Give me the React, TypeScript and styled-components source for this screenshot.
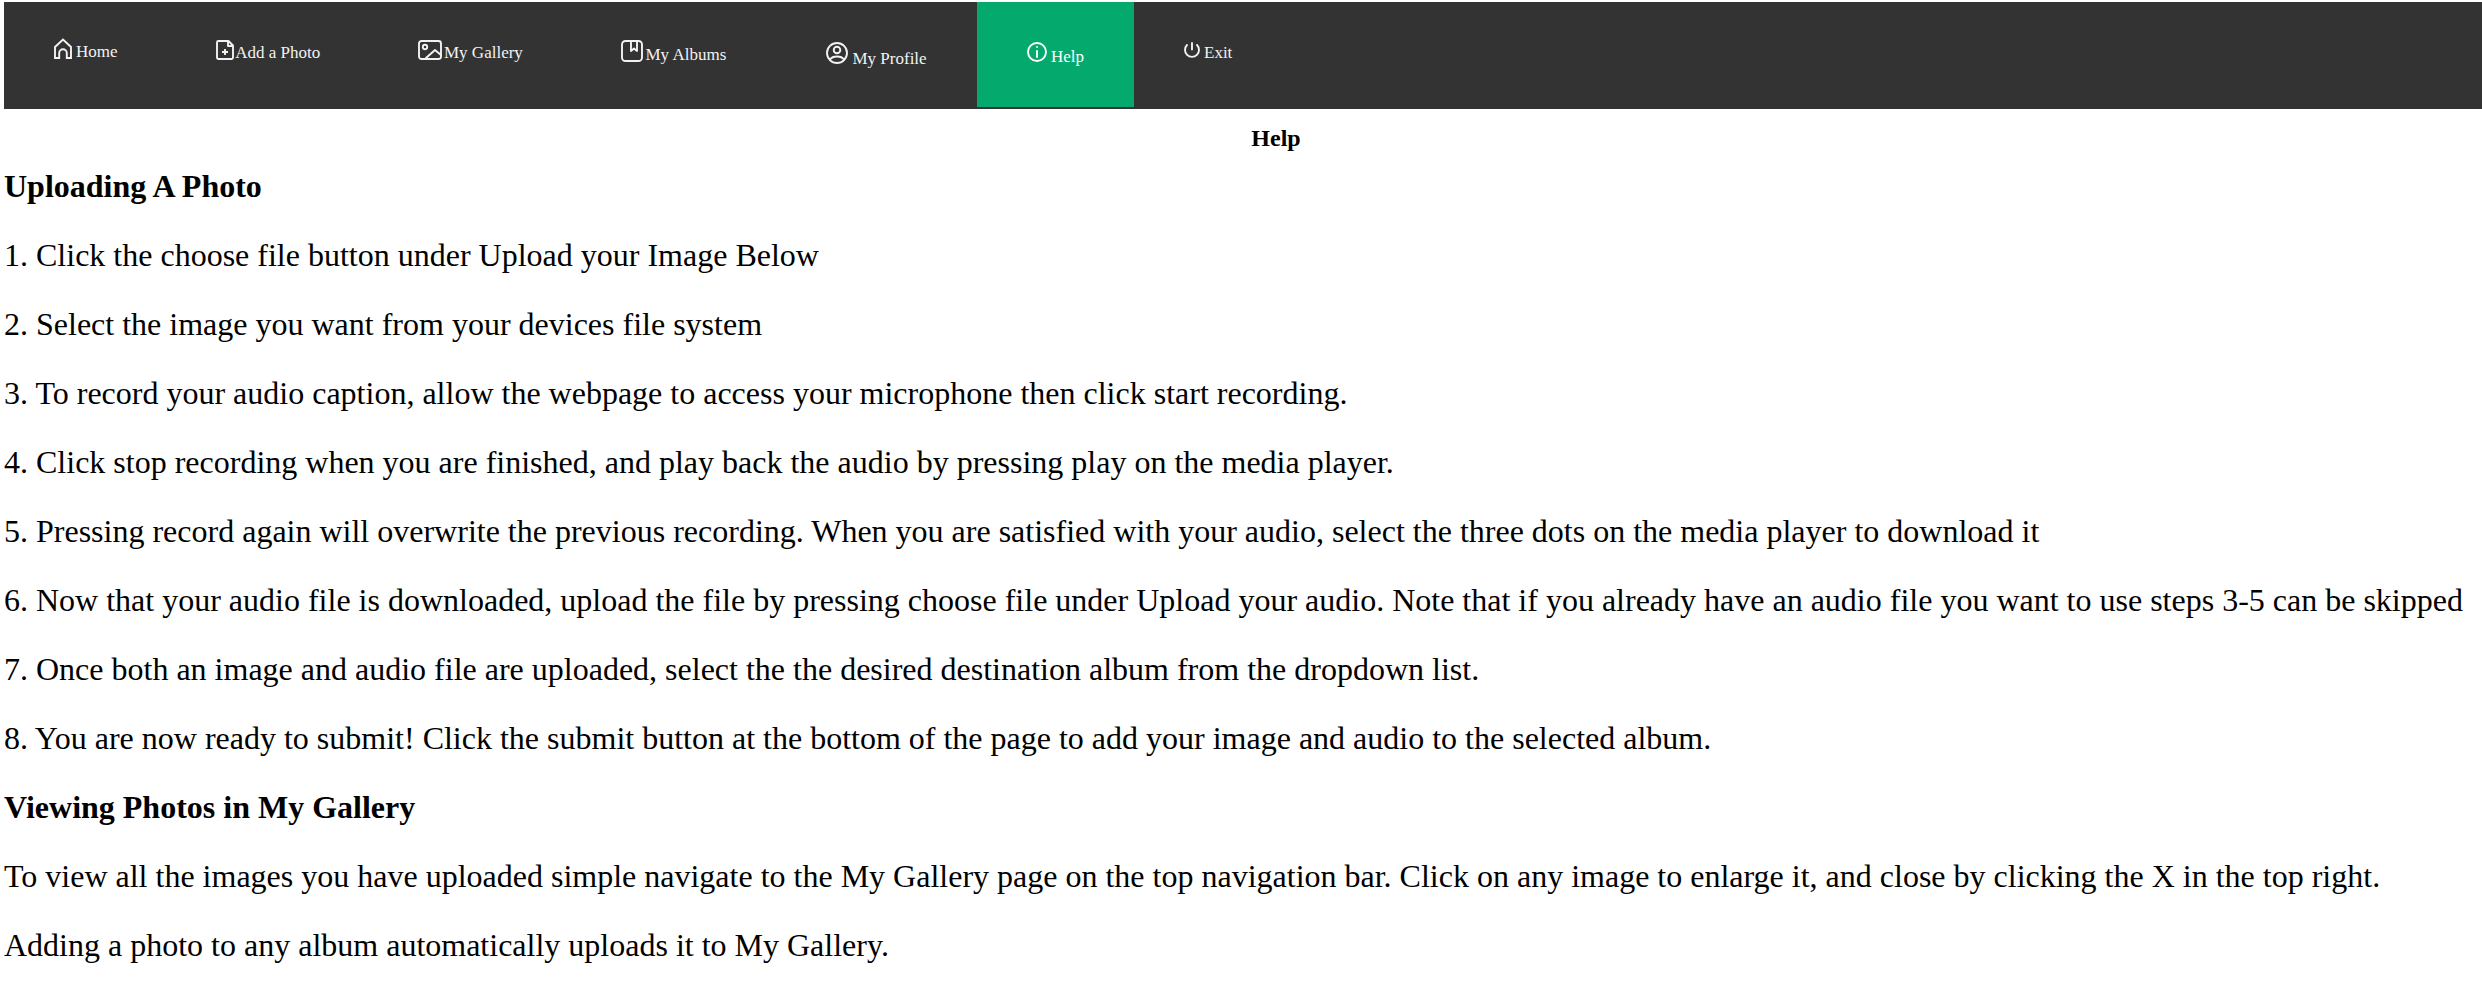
import React from "react";
import styled, { createGlobalStyle } from "styled-components";

const GlobalStyle = createGlobalStyle`
  html, body { margin: 0; background: #fff; overflow: hidden; }
  body { font-family: "Liberation Serif", "Times New Roman", serif; color: #000; }
`;

const Page = styled.div`
  padding: 2px 0 0 4px;
`;

const NavBar = styled.nav`
  display: flex;
  align-items: flex-start;
  height: 107px;
  background: #333;
`;

const NavItem = styled.a<{ $width: number; $gap: number; $active?: boolean }>`
  display: flex;
  align-items: flex-start;
  gap: ${(p) => p.$gap}px;
  box-sizing: border-box;
  width: ${(p) => p.$width}px;
  height: 105px;
  padding-left: 50px;
  background: ${(p) => (p.$active ? "#04aa6d" : "transparent")};
  color: ${(p) => (p.$active ? "#fff" : "#f2f2f2")};
  font-size: 17px;
  line-height: 20px;
  white-space: nowrap;
  text-decoration: none;
`;

const Icon = styled.svg<{ $top: number }>`
  flex: none;
  display: block;
  margin-top: ${(p) => p.$top}px;
  fill: none;
  stroke: currentColor;
  stroke-width: 1.9;
  stroke-linecap: round;
  stroke-linejoin: round;
`;

const Label = styled.span<{ $baseline: number }>`
  margin-top: ${(p) => p.$baseline - 15}px;
`;

const Title = styled.h1`
  margin: 0;
  padding: 15px 0 0 66px;
  height: 28px;
  font-size: 24px;
  line-height: 28px;
  text-align: center;
`;

const Line = styled.p`
  margin: 0;
  font-size: 32px;
  line-height: 69px;
  white-space: nowrap;
`;

const Heading = styled(Line).attrs({ as: "h2" })`
  font-weight: bold;
`;

type Item = {
  label: string;
  width: number;
  gap: number;
  baseline: number;
  icon: { w: number; h: number; top: number; art: React.ReactNode };
  active?: boolean;
};

const items: Item[] = [
  {
    label: "Home", width: 162, gap: 4, baseline: 55,
    icon: { w: 18, h: 22, top: 36, art: <path d="M1 20V9l8-7.500L17 9v11h-4.200v-5a3.500 3.500 0 0 0-7.600 0v5z" strokeLinejoin="miter" /> },
  },
  {
    label: "Add a Photo", width: 202, gap: 1.3, baseline: 56,
    icon: { w: 18, h: 20, top: 38, art: <><path d="M2.500 1H12.500l4.500 4.500v12a1.500 1.500 0 0 1-1.500 1.500h-13A1.500 1.500 0 0 1 1 17.500v-15A1.500 1.500 0 0 1 2.500 1zM12 1v5h5" /><path d="M6 12h6M9 9v6" strokeWidth="1.9" strokeLinecap="butt" /></> },
  },
  {
    label: "My Gallery", width: 203, gap: 2, baseline: 56,
    icon: { w: 24, h: 20, top: 38, art: <><rect x="1" y="1" width="22" height="18" rx="2.500" /><circle cx="7" cy="7" r="2.200" /><path d="M8 18l9-8 6 5" /></> },
  },
  {
    label: "My Albums", width: 205, gap: 2.5, baseline: 58,
    icon: { w: 22, h: 22, top: 38, art: <><rect x="1" y="1" width="20" height="20" rx="3.500" /><path d="M10 1v10l3-2.500 3 2.500V1" /></> },
  },
  {
    label: "My Profile", width: 201, gap: 4.5, baseline: 62,
    icon: { w: 22, h: 22, top: 40, art: <><circle cx="11" cy="11" r="10" /><circle cx="11" cy="8" r="3.300" /><path d="M4 17.500c1.500-2.200 4-3 7-3s5.500.8 7 3" /></> },
  },
  {
    label: "Help", width: 157, gap: 4, baseline: 60, active: true,
    icon: { w: 20, h: 20, top: 40, art: <><circle cx="10" cy="10" r="9" /><path d="M10 9v6M10 5v.1" /></> },
  },
  {
    label: "Exit", width: 150, gap: 4, baseline: 56,
    icon: { w: 16, h: 16, top: 40, art: <path d="M8 1v6.500M3 3a7 7 0 1 0 10 0" /> },
  },
];

const uploadSteps = [
  "1. Click the choose file button under Upload your Image Below",
  "2. Select the image you want from your devices file system",
  "3. To record your audio caption, allow the webpage to access your microphone then click start recording.",
  "4. Click stop recording when you are finished, and play back the audio by pressing play on the media player.",
  "5. Pressing record again will overwrite the previous recording. When you are satisfied with your audio, select the three dots on the media player to download it",
  "6. Now that your audio file is downloaded, upload the file by pressing choose file under Upload your audio. Note that if you already have an audio file you want to use steps 3-5 can be skipped",
  "7. Once both an image and audio file are uploaded, select the the desired destination album from the dropdown list.",
  "8. You are now ready to submit! Click the submit button at the bottom of the page to add your image and audio to the selected album.",
];

const galleryNotes = [
  "To view all the images you have uploaded simple navigate to the My Gallery page on the top navigation bar. Click on any image to enlarge it, and close by clicking the X in the top right.",
  "Adding a photo to any album automatically uploads it to My Gallery.",
];

export default function App() {
  return (
    <Page>
      <GlobalStyle />
      <NavBar>
        {items.map((it) => (
          <NavItem key={it.label} $width={it.width} $gap={it.gap} $active={it.active}>
            <Icon width={it.icon.w} height={it.icon.h} $top={it.icon.top}>{it.icon.art}</Icon>
            <Label $baseline={it.baseline}>{it.label}</Label>
          </NavItem>
        ))}
      </NavBar>
      <Title>Help</Title>
      <Heading>Uploading A Photo</Heading>
      {uploadSteps.map((s) => <Line key={s}>{s}</Line>)}
      <Heading>Viewing Photos in My Gallery</Heading>
      {galleryNotes.map((s) => <Line key={s}>{s}</Line>)}
    </Page>
  );
}
